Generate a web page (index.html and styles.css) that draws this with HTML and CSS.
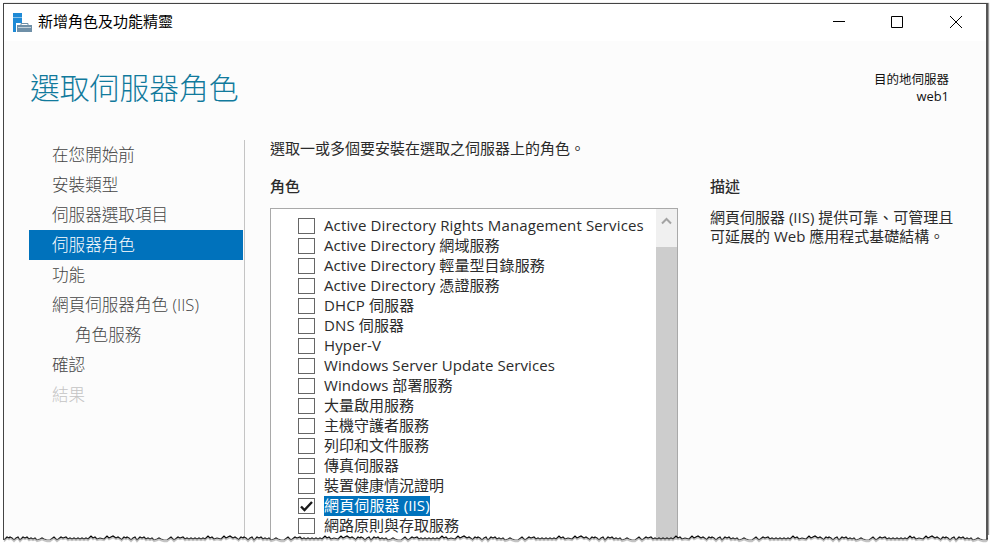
FILE: index.html
```html
<!DOCTYPE html>
<html lang="zh-Hant">
<head>
<meta charset="utf-8">
<title>新增角色及功能精靈</title>
<link rel="stylesheet" href="styles.css">
</head>
<body>
<div class="window">
  <header class="titlebar">
    <svg class="app-icon" width="20" height="20" viewBox="0 0 20 20">
      <path fill="#1e8ad6" d="M0 0h9v19H0z"/>
      <path fill="#8cc4ec" d="M0 4h9v1H0z"/>
      <path fill="#fff" d="M3 10h17v10H3z"/>
      <path fill="#6f90a8" d="M4 12h15v7H4z"/>
      <path fill="none" stroke="#6f90a8" d="M8 12v-1.500h7V12"/>
      <path fill="#c3d2dc" d="M5 14h13v1H5z"/>
    </svg>
    <span class="caption">新增角色及功能精靈</span>
    <svg class="controls" width="131" height="14" viewBox="0 0 131 14" fill="none" stroke="#000">
      <path d="M0 6.500h12M58.500 1.500h11v11h-11zM117 1l12 12M129 1l-12 12"/>
    </svg>
  </header>
  <div class="heading">
    <h1>選取伺服器角色</h1>
    <div class="target"><div>目的地伺服器</div><div class="host">web1</div></div>
  </div>
  <main>
    <nav>
      <a>在您開始前</a>
      <a>安裝類型</a>
      <a>伺服器選取項目</a>
      <a class="current">伺服器角色</a>
      <a>功能</a>
      <a>網頁伺服器角色 (IIS)</a>
      <a class="sub">角色服務</a>
      <a>確認</a>
      <a class="disabled">結果</a>
    </nav>
    <section class="roles">
      <p>選取一或多個要安裝在選取之伺服器上的角色。</p>
      <h2>角色</h2>
      <div class="listbox">
        <ul>
          <li class="wide"><i></i><span>Active Directory Rights Management Services</span></li>
          <li class="latin"><i></i><span>Active Directory 網域服務</span></li>
          <li class="latin"><i></i><span>Active Directory 輕量型目錄服務</span></li>
          <li class="latin"><i></i><span>Active Directory 憑證服務</span></li>
          <li class="wide"><i></i><span>DHCP 伺服器</span></li>
          <li class="wide"><i></i><span>DNS 伺服器</span></li>
          <li class="wide"><i></i><span>Hyper-V</span></li>
          <li class="latin"><i></i><span>Windows Server Update Services</span></li>
          <li class="latin"><i></i><span>Windows 部署服務</span></li>
          <li><i></i><span>大量啟用服務</span></li>
          <li><i></i><span>主機守護者服務</span></li>
          <li><i></i><span>列印和文件服務</span></li>
          <li><i></i><span>傳真伺服器</span></li>
          <li><i></i><span>裝置健康情況證明</span></li>
          <li class="selected wide"><i><svg width="15" height="14" viewBox="0 0 15 14"><path d="M2 7.500l3.500 3.500L13 3" fill="none" stroke="#1a1a1a" stroke-width="2.400"/></svg></i><span>網頁伺服器 (IIS)</span></li>
          <li><i></i><span>網路原則與存取服務</span></li>
        </ul>
        <div class="scrollbar">
          <div class="up"><svg width="11" height="8" viewBox="0 0 11 8"><path d="M1 6.500l4.500-4.500L10 6.500" fill="none" stroke="#a3a3a3" stroke-width="2"/></svg></div>
        </div>
      </div>
    </section>
    <aside>
      <h2>描述</h2>
      <p>網頁伺服器 (IIS) 提供可靠、可管理且可延展的 Web 應用程式基礎結構。</p>
    </aside>
  </main>
</div>
<svg class="torn" width="991" height="9" viewBox="0 0 991 9">
  <defs>
    <linearGradient id="ink" gradientUnits="userSpaceOnUse" x1="0" y1="2" x2="0" y2="6">
      <stop offset="0" stop-color="#000"/><stop offset=".5" stop-color="#444"/><stop offset="1" stop-color="#aaa"/>
    </linearGradient>
    <path id="edge" d="M0 5l3-3 2 1 1-1 2 1 2 2 2-2 2-1 2 3 3-3 2 1 2-1 2 2 2-1 2 1 2-1 2 2 3-1 2-1 2 1 3 1 3 0 4-3 3 3 4-3 2 1 3-1 2 2 2-1 2 1 2-1 2 1 2-1 2 1 2-1 2 1 2-1 2 1 3-3 2 2 2-1 2 2 3-1 4 1 3-3 2 2 4-2 3 2 2-1 3 2"/>
  </defs>
  <path class="cut" d="M0 5h991v5H0z"/>
  <g class="shade">
    <use href="#edge" x="4" y="1.500"/><use href="#edge" x="121" y="1.500"/><use href="#edge" x="238" y="1.500"/><use href="#edge" x="355" y="1.500"/><use href="#edge" x="472" y="1.500"/><use href="#edge" x="589" y="1.500"/><use href="#edge" x="706" y="1.500"/><use href="#edge" x="823" y="1.500"/><use href="#edge" x="940" y="1.500"/>
  </g>
  <g class="line">
    <use href="#edge" x="4"/><use href="#edge" x="121"/><use href="#edge" x="238"/><use href="#edge" x="355"/><use href="#edge" x="472"/><use href="#edge" x="589"/><use href="#edge" x="706"/><use href="#edge" x="823"/><use href="#edge" x="940"/>
  </g>
  <path class="cut" d="M988 0h3v9h-3z"/>
</svg>
</body>
</html>
```
FILE: styles.css
```css
* { box-sizing: border-box; margin: 0; padding: 0; }
body {
  width: 991px; height: 543px; overflow: hidden; position: relative;
  padding: 3px 0 0 3px; background: #fff; color: #2b2b2b;
  font: 400 15px/20px "Open Sans", "Noto Sans CJK TC", sans-serif;
}
.window {
  width: 985px; height: 537px; overflow: hidden;
  display: flex; flex-direction: column;
  background: #fcfcfc;
  border: 1px solid #444; border-right: 2px solid #555; border-bottom: 0;
  box-shadow: 1px 0 1px #999;
}
.titlebar {
  flex: none; height: 37px; padding: 0 22px 2px 9px;
  display: flex; align-items: center; background: #fff; color: #000;
}
.app-icon { margin-top: 2px; }
.controls { margin-bottom: -1px; }
.caption { margin-left: 5px; flex: 1; line-height: 18px; padding-bottom: 2px; }
.heading {
  flex: none; height: 95px; padding: 24px 37px 0 26px;
  display: flex; justify-content: space-between;
}
h1 { font-size: 29.800px; line-height: 46px; font-weight: 300; color: #117a9c; }
.target { padding-top: 7px; text-align: right; font-size: 12.500px; line-height: 16px; color: #111; }
.host { font-family: "Open Sans", sans-serif; font-size: 12.900px; line-height: 16px; }
main { flex: 1; display: flex; padding: 4px 0 0 25px; }
nav {
  width: 216px; border-right: 1px solid #c4c4c4;
  font-size: 16.600px; font-weight: 300; color: #444;
}
nav a { display: block; width: 214px; height: 30px; padding-left: 23px; line-height: 30px; white-space: nowrap; }
nav .sub { padding-left: 46px; }
nav .current { background: #0072bc; color: #fff; }
nav .disabled { color: #c4c4c4; }
.roles { width: 408px; margin-left: 25px; }
.roles p { line-height: 16px; }
h2 { font-size: 15px; line-height: 18px; font-weight: 500; }
.roles h2 { margin-top: 21px; }
.listbox {
  height: 341px; margin-top: 13px; display: flex; justify-content: space-between;
  background: #fff; border: 1px solid #a9a9a9;
}
ul { list-style: none; padding: 7px 0 0 27px; }
li { display: flex; height: 20px; align-items: center; white-space: nowrap; }
li i { width: 17px; height: 16px; margin-right: 9px; border: 1px solid #666; background: #fff; }
li svg { display: block; }
li span { height: 20px; line-height: 18px; }
.latin span { letter-spacing: .08px; }
.wide span { letter-spacing: .13px; }
.selected span { background: #0072bc; color: #fff; }
.scrollbar { width: 21px; background: #cdcdcd; }
.up { height: 38px; padding: 8px 5px; background: #f0f0f0; }
.up svg { display: block; }
aside { width: 250px; margin-left: 32px; padding-top: 37px; }
aside p { margin-top: 13px; line-height: 19px; }
.torn { position: absolute; left: 0; top: 535px; }
.cut { fill: #fff; }
.line { fill: none; stroke: url(#ink); stroke-width: 1.200; }
.shade { fill: none; stroke: #c4c4c4; stroke-width: 1.500; }
```
